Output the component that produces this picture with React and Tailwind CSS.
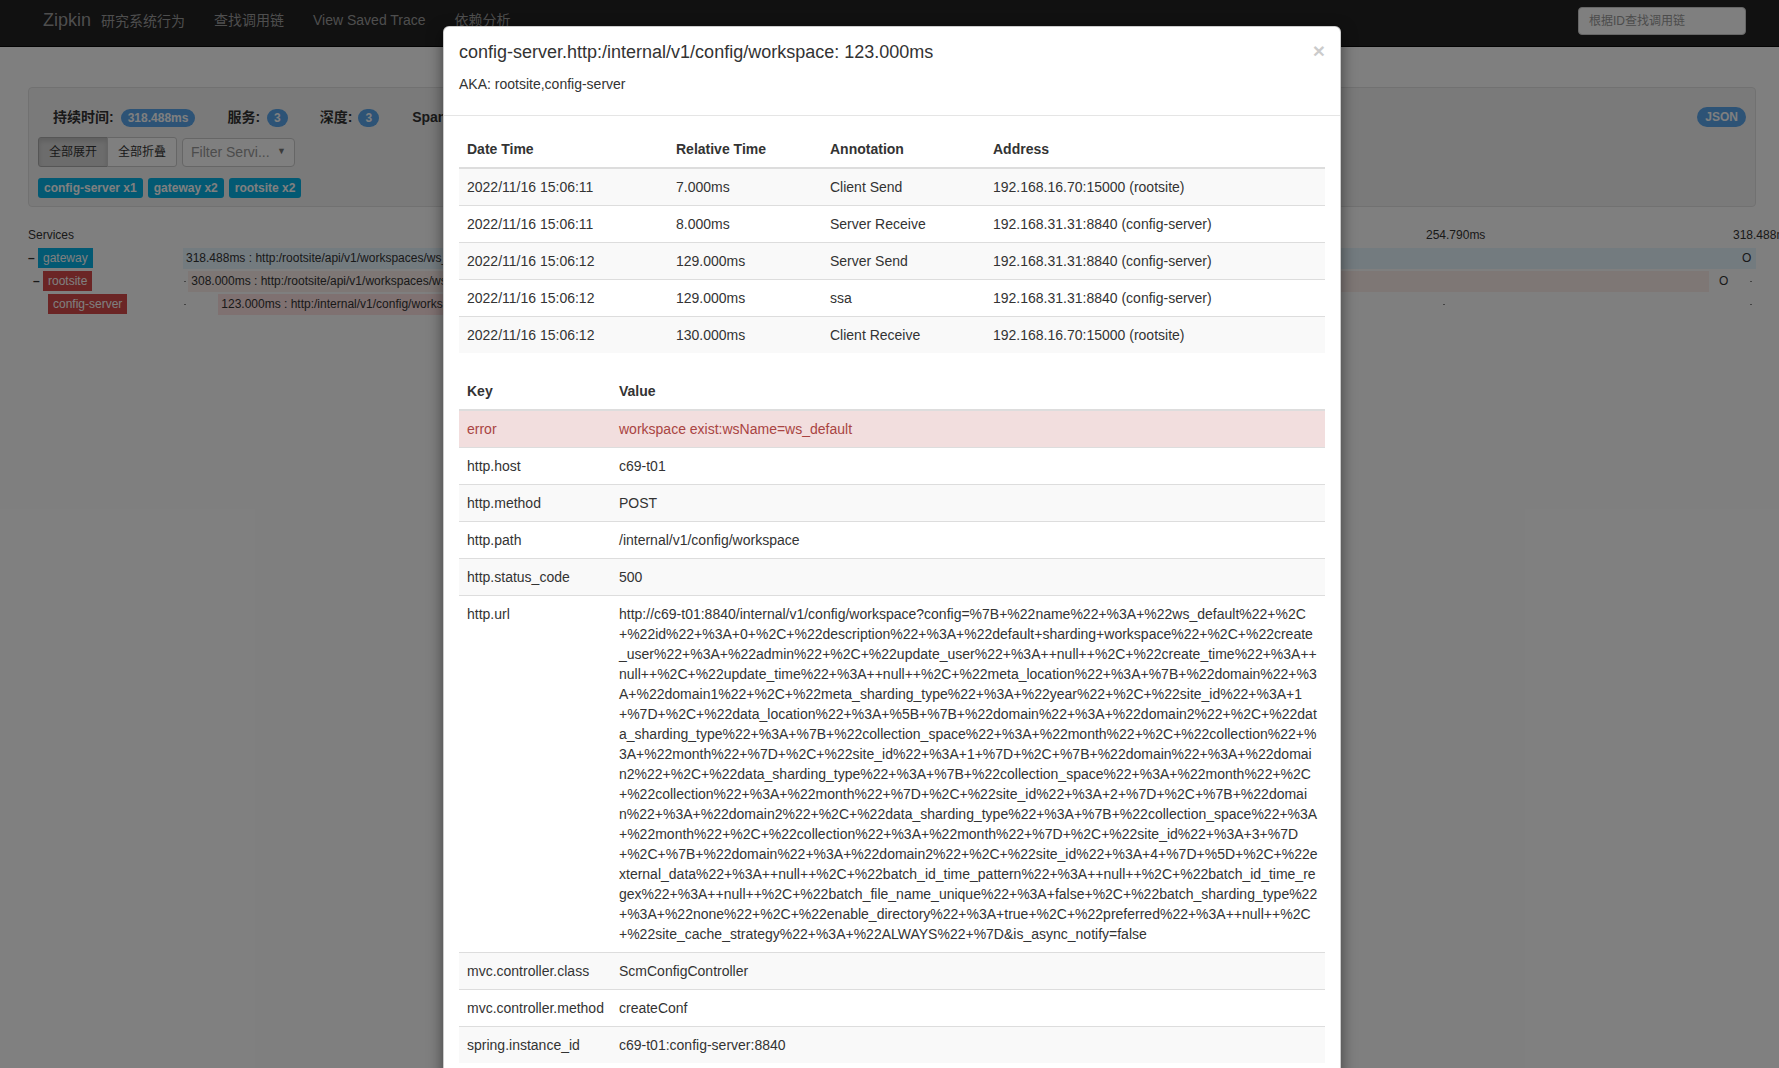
import React from 'react';

const TIMELINE_W = 1573;
const TOTAL_MS = 318.488;

const spans = [
  { name: 'gateway', depth: 0, collapsible: true, label: 'bg-[#06b2e6]', bar: 'bg-[#e6f6ff]', start: 0, dur: 318.488, text: '318.488ms : http:/rootsite/api/v1/workspaces/ws_default/sites', marker: 1559 },
  { name: 'rootsite', depth: 1, collapsible: true, label: 'bg-[#d64a4a]', bar: 'bg-[#fceeeb]', start: 1.07, dur: 308, text: '308.000ms : http:/rootsite/api/v1/workspaces/ws_default/sites', marker: 1536 },
  { name: 'config-server', depth: 2, collapsible: false, label: 'bg-[#d64a4a]', bar: 'bg-[#ffe2e2]', start: 7.15, dur: 123, text: '123.000ms : http:/internal/v1/config/workspace', marker: null },
];

const ticks = [1, 315, 630, 944, 1260, 1567];

const annotations = [
  ['2022/11/16 15:06:11', '7.000ms', 'Client Send', '192.168.16.70:15000 (rootsite)'],
  ['2022/11/16 15:06:11', '8.000ms', 'Server Receive', '192.168.31.31:8840 (config-server)'],
  ['2022/11/16 15:06:12', '129.000ms', 'Server Send', '192.168.31.31:8840 (config-server)'],
  ['2022/11/16 15:06:12', '129.000ms', 'ssa', '192.168.31.31:8840 (config-server)'],
  ['2022/11/16 15:06:12', '130.000ms', 'Client Receive', '192.168.16.70:15000 (rootsite)'],
];

// the url wraps exactly like this in the reference
const urlLines = [
  'http://c69-t01:8840/internal/v1/config/workspace?config=%7B+%22name%22+%3A+%22ws_default%22+%2C',
  '+%22id%22+%3A+0+%2C+%22description%22+%3A+%22default+sharding+workspace%22+%2C+%22create',
  '_user%22+%3A+%22admin%22+%2C+%22update_user%22+%3A++null++%2C+%22create_time%22+%3A++',
  'null++%2C+%22update_time%22+%3A++null++%2C+%22meta_location%22+%3A+%7B+%22domain%22+%3',
  'A+%22domain1%22+%2C+%22meta_sharding_type%22+%3A+%22year%22+%2C+%22site_id%22+%3A+1',
  '+%7D+%2C+%22data_location%22+%3A+%5B+%7B+%22domain%22+%3A+%22domain2%22+%2C+%22dat',
  'a_sharding_type%22+%3A+%7B+%22collection_space%22+%3A+%22month%22+%2C+%22collection%22+%',
  '3A+%22month%22+%7D+%2C+%22site_id%22+%3A+1+%7D+%2C+%7B+%22domain%22+%3A+%22domai',
  'n2%22+%2C+%22data_sharding_type%22+%3A+%7B+%22collection_space%22+%3A+%22month%22+%2C',
  '+%22collection%22+%3A+%22month%22+%7D+%2C+%22site_id%22+%3A+2+%7D+%2C+%7B+%22domai',
  'n%22+%3A+%22domain2%22+%2C+%22data_sharding_type%22+%3A+%7B+%22collection_space%22+%3A',
  '+%22month%22+%2C+%22collection%22+%3A+%22month%22+%7D+%2C+%22site_id%22+%3A+3+%7D',
  '+%2C+%7B+%22domain%22+%3A+%22domain2%22+%2C+%22site_id%22+%3A+4+%7D+%5D+%2C+%22e',
  'xternal_data%22+%3A++null++%2C+%22batch_id_time_pattern%22+%3A++null++%2C+%22batch_id_time_re',
  'gex%22+%3A++null++%2C+%22batch_file_name_unique%22+%3A+false+%2C+%22batch_sharding_type%22',
  '+%3A+%22none%22+%2C+%22enable_directory%22+%3A+true+%2C+%22preferred%22+%3A++null++%2C',
  '+%22site_cache_strategy%22+%3A+%22ALWAYS%22+%7D&is_async_notify=false',
];

const tags = [
  ['error', 'workspace exist:wsName=ws_default'],
  ['http.host', 'c69-t01'],
  ['http.method', 'POST'],
  ['http.path', '/internal/v1/config/workspace'],
  ['http.status_code', '500'],
  ['http.url', null],
  ['mvc.controller.class', 'ScmConfigController'],
  ['mvc.controller.method', 'createConf'],
  ['spring.instance_id', 'c69-t01:config-server:8840'],
];

const Badge = ({ children }) => (
  <span className="inline-block rounded-[10px] bg-[#5aa6ec] px-[7px] py-[3px] text-[12px] font-bold leading-none text-white">
    {children}
  </span>
);

const Navbar = () => (
  <div className="flex h-[47px] items-center border-b border-[#080808] bg-[#222] pb-[5px] pl-[43px] pr-[33px]">
    <span className="text-[18px] text-[#9d9d9d]">Zipkin</span>
    <span className="ml-[10px] mt-[2px] text-[14px] text-[#9d9d9d]">研究系统行为</span>
    <span className="ml-[29px] text-[14px] text-[#9d9d9d]">查找调用链</span>
    <span className="ml-[29px] text-[14px] text-[#9d9d9d]">View Saved Trace</span>
    <span className="ml-[29px] text-[14px] text-[#9d9d9d]">依赖分析</span>
    <div className="ml-auto flex h-[28px] w-[168px] items-center rounded-[4px] border border-[#ccc] bg-white pl-[10px] text-[12px] text-[#999]">
      根据ID查找调用链
    </div>
  </div>
);

const SummaryPanel = () => (
  <div className="mt-[40px] rounded-[4px] border border-[#e3e3e3] bg-[#f5f5f5] pb-[8px] pl-[9px] pr-[9px] pt-[19px]">
    <div className="flex h-[20px] items-center justify-between">
      <div className="flex items-center pl-[15px] text-[14px] font-bold text-[#333]">
        <span>持续时间:</span>
        <span className="ml-[7px]"><Badge>318.488ms</Badge></span>
        <span className="ml-[32px]">服务:</span>
        <span className="ml-[7px]"><Badge>3</Badge></span>
        <span className="ml-[32px]">深度:</span>
        <span className="ml-[6px]"><Badge>3</Badge></span>
        <span className="ml-[33px]">Spans:</span>
        <span className="ml-[7px]"><Badge>5</Badge></span>
      </div>
      <span className="inline-block rounded-[10px] bg-[#5aa6ec] px-[8px] py-[4px] text-[12px] font-bold leading-none text-white">JSON</span>
    </div>
    <div className="mt-[10px] flex items-center">
      <div className="flex h-[30px]">
        <button className="h-full rounded-l-[3px] border border-[#adadad] bg-[#d9d9d9] px-[10px] text-[12px] text-[#333] shadow-[inset_0_3px_5px_rgba(0,0,0,0.125)]">全部展开</button>
        <button className="-ml-px h-full rounded-r-[3px] border border-[#ccc] bg-white px-[10px] text-[12px] text-[#333]">全部折叠</button>
      </div>
      <div className="ml-[5px] flex h-[29px] w-[113px] items-center justify-between rounded-[4px] border border-[#ccc] bg-white pl-[8px] pr-[8px] text-[14px] text-[#999]">
        <span>Filter Servi...</span>
        <span className="text-[9px] text-[#777]">▼</span>
      </div>
    </div>
    <div className="mt-[11px] flex gap-[5px]">
      {['config-server x1', 'gateway x2', 'rootsite x2'].map((t) => (
        <span key={t} className="h-[20px] rounded-[3px] bg-[#06b2e6] px-[6px] text-[12px] font-bold leading-[20px] text-white">{t}</span>
      ))}
    </div>
  </div>
);

const Timeline = () => (
  <div className="mt-[20px] text-[12px] text-[#333]">
    <div className="flex h-[20px]">
      <div className="w-[155px] leading-[17px]">Services</div>
      <div className="relative flex-1 leading-[17px]">
        <span className="absolute left-[1243px] top-0 whitespace-nowrap">254.790ms</span>
        <span className="absolute left-[1550px] top-0 whitespace-nowrap">318.488ms</span>
      </div>
    </div>
    {spans.map((s) => {
      const left = (s.start / TOTAL_MS) * TIMELINE_W;
      const width = (s.dur / TOTAL_MS) * TIMELINE_W;
      return (
        <div key={s.name} className="flex h-[23px]">
          <div className="flex w-[155px] items-start pt-[1px]" style={{ paddingLeft: s.depth * 5 }}>
            <span className="w-[10px] text-[12px] font-bold leading-[20px]">{s.collapsible ? '–' : ''}</span>
            <span className={`h-[20px] px-[5px] leading-[20px] text-white ${s.label}`}>{s.name}</span>
          </div>
          <div className="relative flex-1">
            {ticks.map((x) => (
              <span key={x} className="absolute top-[11px] h-[1px] w-[2px] bg-[#888]" style={{ left: x }} />
            ))}
            <div
              className={`absolute top-[1px] h-[21px] overflow-hidden whitespace-nowrap pl-[3px] leading-[21px] ${s.bar}`}
              style={{ left, width }}
            >
              {s.text}
            </div>
            {s.marker && (
              <span className="absolute top-[1px] leading-[21px]" style={{ left: s.marker }}>O</span>
            )}
          </div>
        </div>
      );
    })}
  </div>
);

const Modal = () => (
  <div className="absolute left-[443px] top-[26px] w-[898px] rounded-[6px] border border-black/20 bg-white text-[#333] shadow-[0_5px_15px_rgba(0,0,0,0.5)]">
    <div className="border-b border-[#e5e5e5] px-[15px] pb-[21px] pt-[15px]">
      <div className="flex items-start justify-between">
        <h4 className="text-[18px] leading-[20px]">config-server.http:/internal/v1/config/workspace: 123.000ms</h4>
        <button className="-mt-[2px] text-[21px] font-bold leading-none text-black opacity-20">×</button>
      </div>
      <p className="mt-[12px] text-[14px] leading-[20px]">AKA: rootsite,config-server</p>
    </div>
    <div className="p-[15px] text-[14px] leading-[20px]">
      <table className="mb-[20px] w-full table-fixed border-collapse">
        <thead>
          <tr>
            <th className="w-[209px] border-b-2 border-[#ddd] p-[8px] text-left font-bold">Date Time</th>
            <th className="w-[154px] border-b-2 border-[#ddd] p-[8px] text-left font-bold">Relative Time</th>
            <th className="w-[163px] border-b-2 border-[#ddd] p-[8px] text-left font-bold">Annotation</th>
            <th className="border-b-2 border-[#ddd] p-[8px] text-left font-bold">Address</th>
          </tr>
        </thead>
        <tbody>
          {annotations.map((row, i) => (
            <tr key={i} className={i % 2 === 0 ? 'bg-[#f9f9f9]' : ''}>
              {row.map((c, j) => (
                <td key={j} className="border-t border-[#ddd] p-[8px]">{c}</td>
              ))}
            </tr>
          ))}
        </tbody>
      </table>
      <table className="w-full table-fixed border-collapse">
        <thead>
          <tr>
            <th className="w-[152px] border-b-2 border-[#ddd] p-[8px] text-left font-bold">Key</th>
            <th className="border-b-2 border-[#ddd] p-[8px] text-left font-bold">Value</th>
          </tr>
        </thead>
        <tbody>
          {tags.map(([k, v], i) => {
            const danger = k === 'error';
            const rowBg = danger ? 'bg-[#f2dede] text-[#a94442]' : i % 2 === 0 ? 'bg-[#f9f9f9]' : '';
            return (
              <tr key={k} className={rowBg}>
                <td className="whitespace-nowrap border-t border-[#ddd] p-[8px] align-top">{k}</td>
                <td className="border-t border-[#ddd] p-[8px] align-top">
                  {v !== null ? v : urlLines.map((l) => (
                    <div key={l} className="whitespace-nowrap">{l}</div>
                  ))}
                </td>
              </tr>
            );
          })}
        </tbody>
      </table>
    </div>
  </div>
);

export default function App() {
  return (
    <div className="relative h-[1068px] w-full overflow-hidden bg-white font-['Liberation_Sans','Noto_Sans_CJK_SC',sans-serif] text-[#333]">
      <Navbar />
      <div className="pl-[28px] pr-[23px]">
        <SummaryPanel />
        <Timeline />
      </div>
      <div className="absolute inset-0 bg-black/50" />
      <Modal />
    </div>
  );
}
